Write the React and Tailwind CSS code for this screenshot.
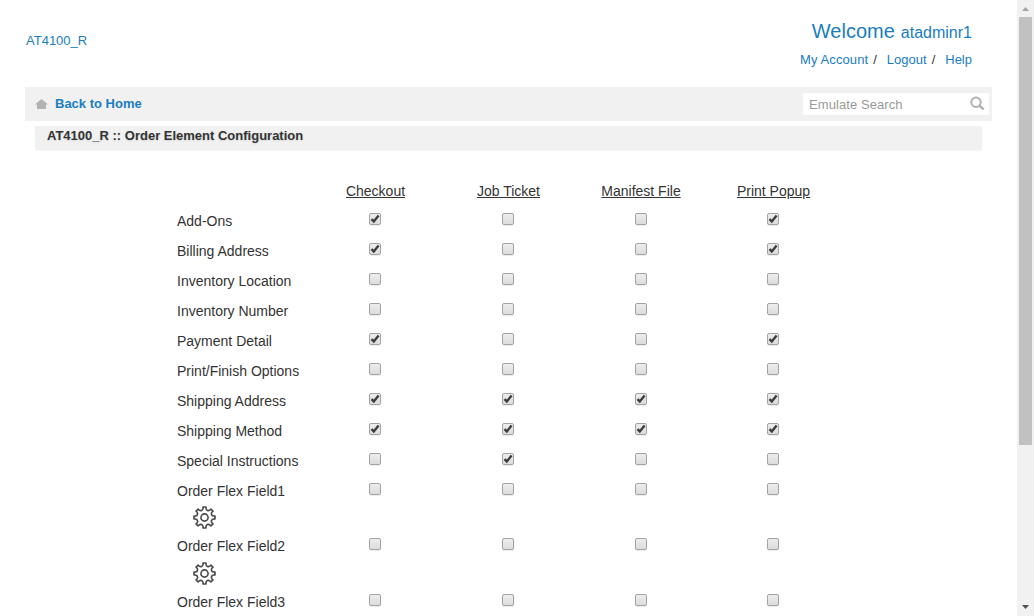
import React from "react";

const COLUMNS = ["Checkout", "Job Ticket", "Manifest File", "Print Popup"];

const ROWS = [
  { label: "Add-Ons", checked: [1, 0, 0, 1] },
  { label: "Billing Address", checked: [1, 0, 0, 1] },
  { label: "Inventory Location", checked: [0, 0, 0, 0] },
  { label: "Inventory Number", checked: [0, 0, 0, 0] },
  { label: "Payment Detail", checked: [1, 0, 0, 1] },
  { label: "Print/Finish Options", checked: [0, 0, 0, 0] },
  { label: "Shipping Address", checked: [1, 1, 1, 1] },
  { label: "Shipping Method", checked: [1, 1, 1, 1] },
  { label: "Special Instructions", checked: [0, 1, 0, 0] },
  { label: "Order Flex Field1", checked: [0, 0, 0, 0], gear: "mt-[5px]", height: "h-[55px]" },
  { label: "Order Flex Field2", checked: [0, 0, 0, 0], gear: "mt-[6px]", height: "h-[56px]" },
  { label: "Order Flex Field3", checked: [0, 0, 0, 0] },
];

// Eight flat-topped teeth joined by rounded valleys.
function gearPath() {
  const point = (radius, degrees) => {
    const a = ((degrees - 90) * Math.PI) / 180;
    return `${(11.5 + radius * Math.cos(a)).toFixed(2)} ${(11.5 + radius * Math.sin(a)).toFixed(2)}`;
  };
  let d = `M${point(10.6, -8)}`;
  for (let i = 0; i < 8; i++) {
    const t = i * 45;
    d += `L${point(10.6, t + 8)}L${point(9, t + 9.5)}C${point(7.3, t + 16)} ${point(7.3, t + 29)} ${point(9, t + 35.5)}L${point(10.6, t + 37)}`;
  }
  return d + "Z";
}

const GEAR = gearPath();

function Gear() {
  return (
    <svg className="ml-4 block h-[23px] w-[23px]" viewBox="0 0 23 23" fill="none" stroke="#484848" strokeWidth="1.6" strokeLinejoin="round">
      <path d={GEAR} />
      <circle cx="11.5" cy="11.5" r="3.6" />
    </svg>
  );
}

function Checkbox({ checked }) {
  return (
    <span
      role="checkbox"
      aria-checked={Boolean(checked)}
      className="block h-3 w-3 rounded-[2px] border border-[#a3a3a3] bg-linear-to-b from-[#ededed] to-[#dcdcdc] shadow-[0_1px_1px_rgba(0,0,0,0.08)]"
    >
      {checked ? (
        <svg className="block h-[10px] w-[10px]" viewBox="0 0 10 10" fill="none" stroke="#3c3c3c" strokeWidth="2.4">
          <path d="M1.5 5.1L3.8 7.4L8.6 1.6" />
        </svg>
      ) : null}
    </span>
  );
}

function Header() {
  return (
    <header className="flex h-[87px] justify-between pr-[20px] pl-px text-[13px] text-[#1a7dc0]">
      <a className="mt-[32px] leading-[18px]">AT4100_R</a>
      <div className="flex flex-col items-end">
        <div className="mt-[19px] flex h-6 items-baseline gap-[6px] leading-6">
          <span className="text-[20px]">Welcome</span>
          <span className="text-[16px]">atadminr1</span>
        </div>
        <div className="mt-2 flex leading-[18px]">
          <a className="tracking-[0.1px]">My Account</a>
          <span className="mr-[10px] ml-[5px] text-[#333]">/</span>
          <a>Logout</a>
          <span className="mr-[10px] ml-[5px] text-[#333]">/</span>
          <a>Help</a>
        </div>
      </div>
    </header>
  );
}

function NavBar() {
  return (
    <nav className="flex h-[34px] items-center justify-between bg-[#f1f1f1] pr-[3px] pl-[10px]">
      <a className="flex items-center gap-[7px] text-[13px] font-bold text-[#1a7dc0]">
        <svg className="block h-[10px] w-[13px]" viewBox="0 0 13 10" fill="#b2b2b2">
          <path d="M6.5 0L13 5.5H11V10H2V5.5H0Z" />
        </svg>
        <span className="leading-[18px]">Back to Home</span>
      </a>
      <div className="flex h-[22px] w-[186px] items-center justify-between rounded-[2px] bg-white pr-1 pl-[6px] text-[13px] text-[#999]">
        <span className="pt-[2px] leading-[18px] tracking-[0.08px]">Emulate Search</span>
        <svg className="mb-px block h-[15px] w-[15px]" viewBox="0 0 15 15" fill="none" stroke="#b0b0b0" strokeWidth="2">
          <circle cx="6" cy="6.3" r="4.7" />
          <path d="M9.6 9.8L13.7 13.4" strokeWidth="2.4" />
        </svg>
      </div>
    </nav>
  );
}

function Scrollbar() {
  return (
    <div className="flex h-full w-[17px] flex-col items-center bg-[#f1f1f1]">
      <svg className="block h-[17px] w-[17px] shrink-0" viewBox="0 0 17 17" fill="#a3a3a3">
        <path d="M5 11L8.5 7L12 11Z" />
      </svg>
      <div className="h-[428px] w-[13px] bg-[#c1c1c1]" />
      <svg className="mt-auto block h-[17px] w-[17px] shrink-0" viewBox="0 0 17 17" fill="#505050">
        <path d="M5 6L8.5 10L12 6Z" />
      </svg>
    </div>
  );
}

export default function App() {
  return (
    <div className="flex h-[616px] w-[1034px] overflow-hidden bg-white font-['Liberation_Sans',Arial,sans-serif] text-[#333]">
      <main className="h-full min-w-0 flex-1 overflow-hidden pr-[25px] pl-[25px]">
        <Header />
        <NavBar />
        <h1 className="mx-[10px] mt-[5px] h-6 bg-[#f1f1f1] pl-3 text-[13px] leading-[19px] font-bold shadow-[0_1px_1px_rgba(0,0,0,0.03)] [text-shadow:0_1px_2px_rgba(0,0,0,0.12)]">
          AT4100_R :: Order Element Configuration
        </h1>
        <section className="mt-[26px] ml-[152px] text-[14px]">
          <div className="grid h-[30px] grid-cols-[132px_133px_133px_132px_133px]">
            <span />
            {COLUMNS.map((name) => (
              <span key={name} className="pt-[5px] text-center leading-5 underline">
                {name}
              </span>
            ))}
          </div>
          {ROWS.map((row) => (
            <div key={row.label} className={`grid grid-cols-[132px_133px_133px_132px_133px] ${row.height || "h-[30px]"}`}>
              <div className="pt-[5px] whitespace-nowrap">
                <div className="leading-5">{row.label}</div>
                {row.gear ? (
                  <div className={row.gear}>
                    <Gear />
                  </div>
                ) : null}
              </div>
              {row.checked.map((checked, i) => (
                <div key={COLUMNS[i]} className="flex justify-center pt-[7px] pr-px">
                  <Checkbox checked={checked} />
                </div>
              ))}
            </div>
          ))}
        </section>
      </main>
      <Scrollbar />
    </div>
  );
}
